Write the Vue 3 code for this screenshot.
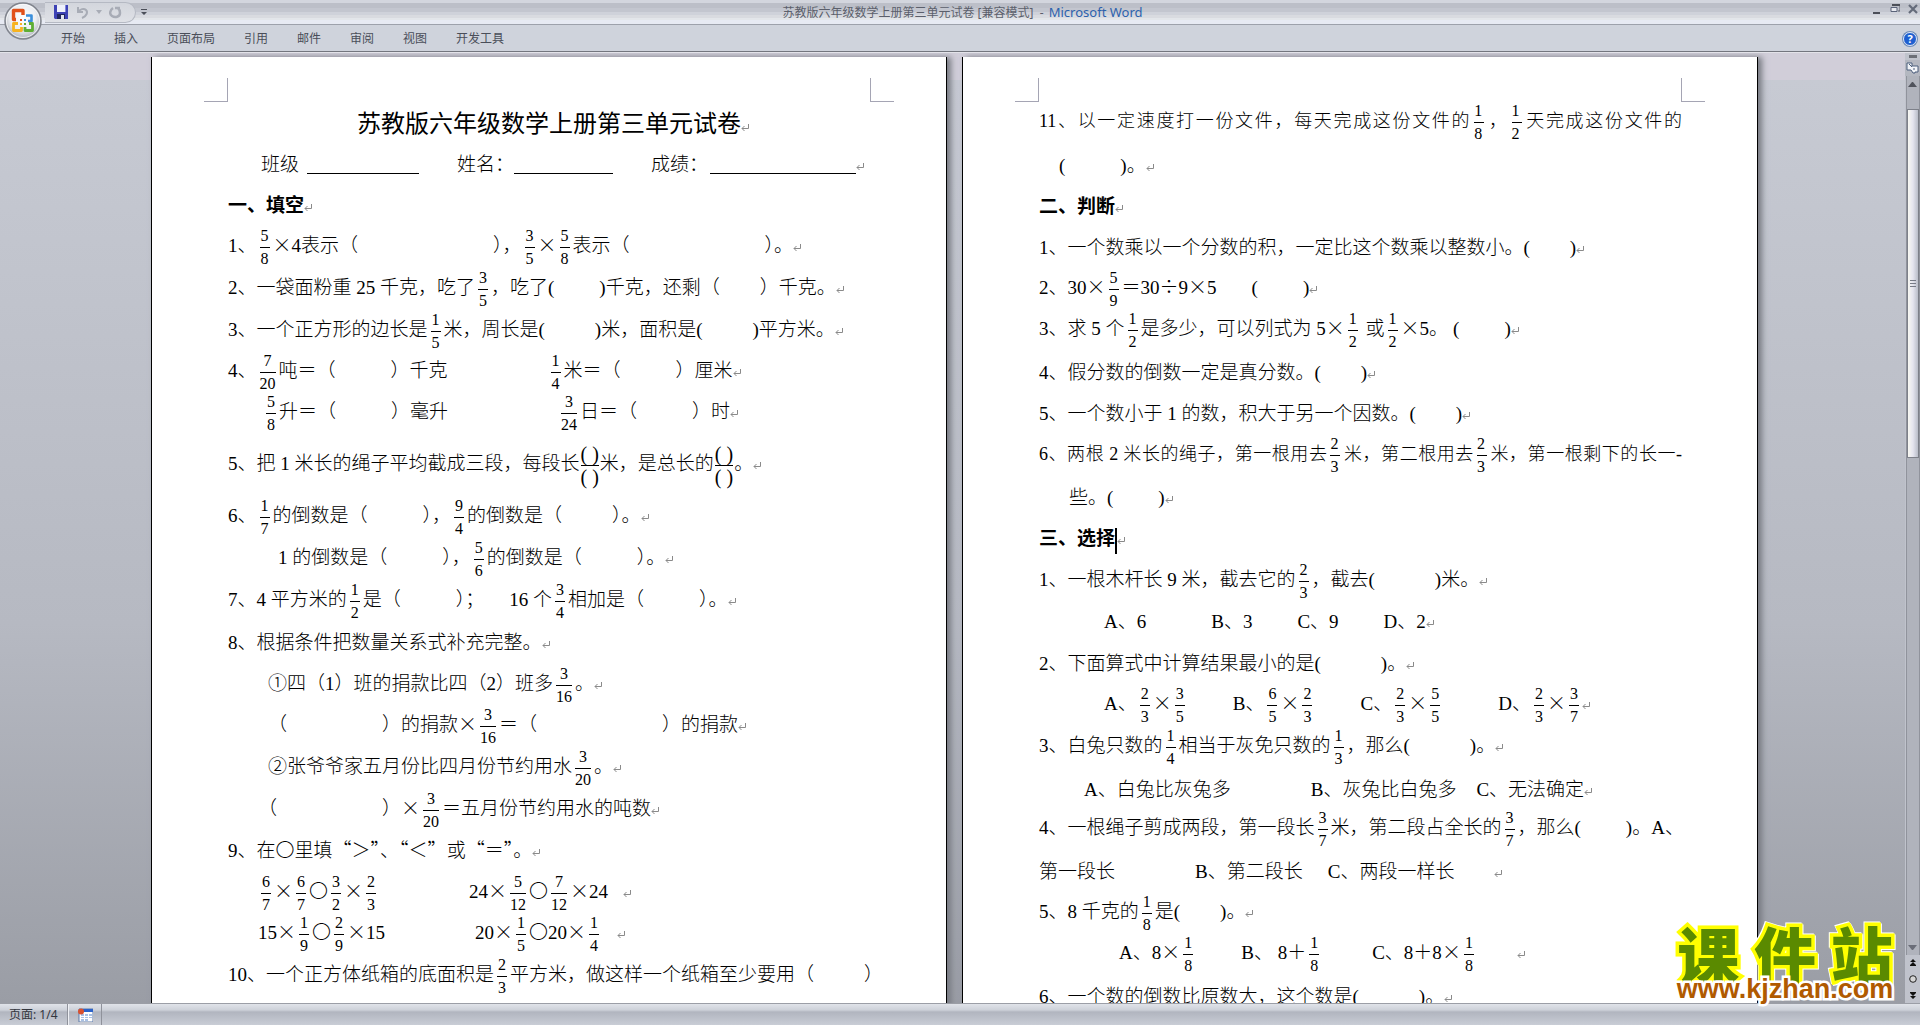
<script setup>
const tabs = ['开始', '插入', '页面布局', '引用', '邮件', '审阅', '视图', '开发工具']

// Line markup: {a/b} fraction, [n] blank of n pixels, *x* bold, ¶ paragraph mark, | caret
const pageOne = [
  { h: 40, kind: 'heading', t: '一、填空¶' },
  { h: 42, t: '1、{5/8}×4表示（[135]），{3/5}×{5/8}表示（[135]）。¶' },
  { h: 42, t: '2、一袋面粉重 *25* 千克，吃了{3/5}，吃了([45])千克，还剩（[40]）千克。¶' },
  { h: 41, t: '3、一个正方形的边长是{1/5}米，周长是([50])米，面积是([50])平方米。¶' },
  { h: 41, t: '4、{7/20}吨＝（[55]）千克[100]{1/4}米＝（[55]）厘米¶' },
  { h: 52, t: '[35]{5/8}升＝（[55]）毫升[110]{3/24}日＝（[55]）时¶' },
  { h: 52, t: '5、把 1 米长的绳子平均截成三段，每段长{( )/( )}米，是总长的{( )/( )}。¶' },
  { h: 42, t: '6、{1/7}的倒数是（[55]），{9/4}的倒数是（[50]）。¶' },
  { h: 42, t: '[50]1 的倒数是（[55]），{5/6}的倒数是（[55]）。¶' },
  { h: 43, t: '7、4 平方米的{1/2}是（[55]）；[25]16 个{3/4}相加是（[55]）。¶' },
  { h: 41, t: '8、根据条件把数量关系式补充完整。¶' },
  { h: 41, t: '[40]①四（1）班的捐款比四（2）班多{3/16}。¶' },
  { h: 42, t: '[40]（[95]）的捐款×{3/16}＝（[125]）的捐款¶' },
  { h: 42, t: '[40]②张爷爷家五月份比四月份节约用水{3/20}。¶' },
  { h: 42, t: '[30]（[105]）×{3/20}＝五月份节约用水的吨数¶' },
  { h: 41, t: '9、在〇里填“＞”、“＜”或“＝”。¶' },
  { h: 41, t: '[30]{6/7}×{6/7}〇{3/2}×{2/3}[90]24×{5/12}〇{7/12}×24[15]¶' },
  { h: 42, t: '[30]15×{1/9}〇{2/9}×15[90]20×{1/5}〇20×{1/4}[15]¶' },
  { h: 42, t: '10、一个正方体纸箱的底面积是{2/3}平方米，做这样一个纸箱至少要用（[50]）' },
]

const pageTwo = [
  { h: 45, kind: 'full', t: '11、以一定速度打一份文件，每天完成这份文件的{1/8}，{1/2}天完成这份文件的' },
  { h: 41, t: '[20]([55])。¶' },
  { h: 41, kind: 'heading', t: '二、判断¶' },
  { h: 40, t: '1、一个数乘以一个分数的积，一定比这个数乘以整数小。([40])¶' },
  { h: 41, t: '2、30×{5/9}＝30÷9×5[35]([45])¶' },
  { h: 44, t: '3、求 5 个{1/2}是多少，可以列式为 5×{1/2} 或{1/2}×5。[5]([45])¶' },
  { h: 41, t: '4、假分数的倒数一定是真分数。([40])¶' },
  { h: 40, t: '5、一个数小于 1 的数，积大于另一个因数。([40])¶' },
  { h: 44, kind: 'full', t: '6、两根 2 米长的绳子，第一根用去{2/3}米，第二根用去{2/3}米，第一根剩下的长一-' },
  { h: 41, t: '[30]些。([45])¶' },
  { h: 41, kind: 'heading', t: '三、选择|¶' },
  { h: 42, t: '1、一根木杆长 9 米，截去它的{2/3}，截去([60])米。¶' },
  { h: 42, t: '[65]A、6[65]B、3[45]C、9[45]D、2¶' },
  { h: 40, t: '2、下面算式中计算结果最小的是([60])。¶' },
  { h: 42, t: '[65]A、{2/3}×{3/5}[45]B、{6/5}×{2/3}[45]C、{2/3}×{5/5}[55]D、{2/3}×{3/7}¶' },
  { h: 44, t: '3、白兔只数的{1/4}相当于灰免只数的{1/3}，那么([60])。¶' },
  { h: 38, t: '[45]A、白兔比灰兔多[80]B、灰兔比白兔多[20]C、无法确定¶' },
  { h: 44, t: '4、一根绳子剪成两段，第一段长{3/7}米，第二段占全长的{3/7}，那么([45])。A、' },
  { h: 40, t: '第一段长[80]B、第二段长[25]C、两段一样长[40]¶' },
  { h: 41, t: '5、8 千克的{1/8}是([40])。¶' },
  { h: 44, t: '[80]A、8×{1/8}[45]B、 8＋{1/8}[50]C、8＋8×{1/8}[40]¶' },
  { h: 42, t: '6、一个数的倒数比原数大，这个数是([60])。¶' },
]

const pattern = /\{([^/]+)\/([^}]+)\}|\[(\d+)\]|\*([^*]+)\*|([×÷“”]+)|(¶)|(\|)|([^{[*×÷“”¶|]+)/g

function parse(line) {
  return [...line.matchAll(pattern)].map((m) => {
    if (m[1]) return { type: 'frac', top: m[1], bottom: m[2], tall: m[1] === '( )' }
    if (m[3]) return { type: 'gap', width: Number(m[3]) }
    if (m[4]) return { type: 'bold', text: m[4] }
    if (m[5]) return { type: 'wide', text: m[5] }
    if (m[6]) return { type: 'mark' }
    if (m[7]) return { type: 'caret' }
    return { type: 'text', text: m[8] }
  })
}

const prepare = (lines) => lines.map((l) => ({ ...l, tokens: parse(l.t) }))
const pages = [
  { id: 'one', lines: prepare(pageOne) },
  { id: 'two', lines: prepare(pageTwo) },
]
const fields = [
  { label: '班级', size: 'medium' },
  { label: '姓名：', size: 'small' },
  { label: '成绩：', size: 'large' },
]
</script>

<template>
  <div class="window">
    <header class="titlebar">
      <button class="orb" aria-label="Office">
        <svg width="38" height="38" viewBox="0 0 38 38">
          <defs>
            <radialGradient id="orbFill" cx="50%" cy="40%" r="60%">
              <stop offset="0" stop-color="#fff" />
              <stop offset=".6" stop-color="#eceef2" />
              <stop offset="1" stop-color="#a9adb6" />
            </radialGradient>
          </defs>
          <circle cx="19" cy="19" r="18" fill="url(#orbFill)" stroke="#80848d" stroke-width="1.5" />
          <circle cx="19" cy="19" r="16.5" fill="none" stroke="#fff" stroke-opacity=".7" />
          <g fill="none" stroke-width="3.4" stroke-linejoin="round">
            <path d="M12 17.500H9.500V8.500H19V13" stroke="#e1501a" />
            <path d="M22 13.500H27.500V19H24" stroke="#3b8fdb" stroke-width="2.600" />
            <path d="M14 21.500H9.500V28.500H17.500V25" stroke="#f7b320" stroke-width="2.800" />
            <path d="M21 25V28.500H28.500V21.500H25" stroke="#5fae35" stroke-width="2.800" />
          </g>
          <path d="M16 17h2v2h-2z" fill="#e1501a" />
          <path d="M20 17h2v2h-2z" fill="#3b8fdb" />
          <path d="M16 21h2v2h-2z" fill="#f7b320" />
          <path d="M20 21h2v2h-2z" fill="#5fae35" />
        </svg>
      </button>
      <div class="quick">
        <button aria-label="保存">
          <svg width="14" height="14" viewBox="0 0 14 14">
            <path d="M0 0h14v14H1l-1-1z" fill="#3d42b5" />
            <path d="M3 0h8v7H3z" fill="#eef1fb" />
            <path d="M11 0h1v7h-1z" fill="#7f86dd" />
            <path d="M3 9h8v5H3z" fill="#20265f" />
            <path d="M7 10h3v4H7z" fill="#e3e6f0" />
          </svg>
        </button>
        <button aria-label="撤消">
          <svg width="13" height="13" viewBox="0 0 13 13" fill="none" stroke="#a8acb6" stroke-width="2">
            <path d="M2 1v5h5M2 6c2-3 6-4 8-2s1 6-4 8" />
          </svg>
        </button>
        <button class="drop" aria-label="撤消列表">
          <svg width="6" height="4" viewBox="0 0 6 4"><path d="M0 0h6L3 4z" fill="#a8acb6" /></svg>
        </button>
        <button aria-label="重复">
          <svg width="13" height="13" viewBox="0 0 13 13" fill="none" stroke="#a8acb6" stroke-width="2.500">
            <path d="M4 2C1 4 0 8 3 10s8 1 8-3c0-2-1-4-2-5M6 2h5" />
          </svg>
        </button>
      </div>
      <button class="more" aria-label="自定义快速访问工具栏">
        <svg width="6" height="6" viewBox="0 0 6 6"><path d="M0 0h6v1H0zM0 3h6L3 6z" fill="#4b4f59" /></svg>
      </button>
      <h1 class="caption">苏教版六年级数学上册第三单元试卷 [兼容模式]&nbsp; - <span>Microsoft Word</span></h1>
      <div class="controls">
        <button aria-label="最小化">
          <svg width="10" height="10" viewBox="0 0 10 10"><path d="M1 8h7v2H1z" fill="#4c4f58" /></svg>
        </button>
        <button aria-label="还原">
          <svg width="10" height="10" viewBox="0 0 10 10">
            <path d="M2 1h8v6H8" fill="none" stroke="#5a5f6d" />
            <path d="M2 0h8v2H2z" fill="#4c4f58" />
            <path d="M1 3.500h6v4H1z" fill="#e8eaf0" stroke="#5a6379" />
          </svg>
        </button>
        <button aria-label="关闭">
          <svg width="10" height="10" viewBox="0 0 10 10"><path d="M1 1l8 8M9 1l-8 8" stroke="#646b7a" stroke-width="2.200" /></svg>
        </button>
      </div>
    </header>

    <nav class="ribbon">
      <button v-for="tab in tabs" :key="tab" class="tab">{{ tab }}</button>
      <button class="help" aria-label="帮助">?</button>
    </nav>

    <main class="workspace">
      <div class="desk">
        <article v-for="page in pages" :key="page.id" class="page" :class="page.id">
          <div class="corners"><i></i><i></i></div>
          <template v-if="page.id === 'one'">
            <h2 class="doc-title">
              苏教版六年级数学上册第三单元试卷<svg class="mark" width="8" height="8" viewBox="0 0 8 8"><path d="M7.500 0v4.500H1M3.500 2L1 4.500L3.500 7" /></svg>
            </h2>
            <p class="fields">
              <span v-for="f in fields" :key="f.label" class="field">{{ f.label }}<i :class="f.size"></i></span>
              <svg class="mark" width="8" height="8" viewBox="0 0 8 8"><path d="M7.500 0v4.500H1M3.500 2L1 4.500L3.500 7" /></svg>
            </p>
          </template>
          <p v-for="(line, n) in page.lines" :key="n" class="line" :class="line.kind" :style="{ minHeight: line.h + 'px' }">
            <template v-for="(k, i) in line.tokens" :key="i">
              <span v-if="k.type === 'frac'" class="frac" :class="{ tall: k.tall }"><span>{{ k.top }}</span><span>{{ k.bottom }}</span></span>
              <span v-else-if="k.type === 'gap'" class="gap" :style="{ width: k.width + 'px' }"></span>
              <b v-else-if="k.type === 'bold'">{{ k.text }}</b>
              <span v-else-if="k.type === 'wide'" class="wide">{{ k.text }}</span>
              <svg v-else-if="k.type === 'mark'" class="mark" width="8" height="8" viewBox="0 0 8 8"><path d="M7.500 0v4.500H1M3.500 2L1 4.500L3.500 7" /></svg>
              <span v-else-if="k.type === 'caret'" class="caret"></span>
              <template v-else>{{ k.text }}</template>
            </template>
          </p>
        </article>
      </div>

      <aside class="scroll">
        <div class="split"></div>
        <button class="ruler" aria-label="标尺">
          <svg width="13" height="12" viewBox="0 0 13 12">
            <path d="M1 1h5v3h6v6H9v1H7L5 8H1z" fill="#f2f4f8" stroke="#4d5f7c" />
            <path d="M3 2l3 3M8 6v2" stroke="#4d5f7c" />
          </svg>
        </button>
        <div class="track">
          <button class="arrow" aria-label="向上滚动">
            <svg width="9" height="5" viewBox="0 0 9 5"><path d="M0 5h9L5 0H4z" fill="#50535c" /></svg>
          </button>
          <div class="rail"><div class="thumb"><i></i><i></i><i></i></div></div>
          <button class="arrow down" aria-label="向下滚动">
            <svg width="9" height="5" viewBox="0 0 9 5"><path d="M0 0h9L5 5H4z" fill="#6a6d78" /></svg>
          </button>
        </div>
        <div class="browse">
          <button aria-label="前一页">
            <svg width="6" height="7" viewBox="0 0 6 7"><path d="M3 0l3 3H0zM3 3l3 3H0zM0 6h6v1H0z" fill="#111" /></svg>
          </button>
          <button aria-label="选择浏览对象">
            <svg width="8" height="8" viewBox="0 0 8 8"><circle cx="4" cy="4" r="3.300" fill="#d5d5d5" stroke="#222" /></svg>
          </button>
          <button aria-label="下一页">
            <svg width="6" height="7" viewBox="0 0 6 7"><path d="M0 0h6v1H0zM0 1h6L3 4zM0 4h6L3 7z" fill="#111" /></svg>
          </button>
        </div>
      </aside>
    </main>

    <footer class="status">
      <span class="pages">页面: 1/4</span>
      <button class="macro" aria-label="录制宏">
        <svg width="15" height="14" viewBox="0 0 15 14">
          <path d="M1 1h14v13H1z" fill="#fff" stroke="#5a78a8" />
          <path d="M3 1h12v3H3z" fill="#2b62c9" />
          <path d="M3 6h3v2H3zM7 6h3v2H7zM11 6h3v2h-3zM3 9h3v1H3zM7 9h3v1H7zM11 9h3v1h-3zM3 11h3v2H3zM7 11h3v2H7z" fill="#a9c1e4" />
          <circle cx="3" cy="3.500" r="3" fill="#d9512f" />
        </svg>
      </button>
    </footer>

    <div class="stamp">
      <div class="stamp-name"><span>课</span><span>件</span><span>站</span></div>
      <div class="stamp-url">www.kjzhan.com</div>
    </div>
  </div>
</template>

<style>
body {
  margin: 0;
  overflow: hidden;
}
</style>

<style scoped>
* {
  box-sizing: border-box;
}
button {
  display: flex;
  align-items: center;
  justify-content: center;
  border: 0;
  padding: 0;
  background: none;
  font: inherit;
  color: inherit;
}
.window {
  position: relative;
  display: flex;
  flex-direction: column;
  height: 100vh;
  background: #c8cbd4;
  font-family: "Noto Sans", "Noto Sans CJK SC", sans-serif;
  font-size: 12px;
  color: #4a4e59;
}
.titlebar {
  position: relative;
  display: flex;
  align-items: center;
  flex: none;
  height: 25px;
  padding-left: 45px;
  border-bottom: 1px solid #9da1ab;
  background: linear-gradient(#d3d6de 0 3px, #bcbfc8 3px 8px, #c3c6cf 8px 12px, #cfd2da 12px 15px, #d9dbe0 15px 18px, #e3e6ea 18px 20px, #e7eaf3 20px);
}
.orb {
  position: absolute;
  left: 4px;
  top: 2px;
  z-index: 2;
}
.quick {
  display: flex;
  align-items: center;
  gap: 8px;
  width: 91px;
  height: 21px;
  padding-left: 9px;
  border: 1px solid #b5b9c3;
  border-left: 0;
  border-radius: 0 11px 11px 0;
  background: linear-gradient(#d3d6dd, #dfe1e6);
}
.drop {
  margin: 0 -1px;
}
.more {
  margin-left: 5px;
}
.caption {
  position: absolute;
  left: 0;
  right: 0;
  top: 0;
  margin: 0;
  text-align: center;
  font-size: 12px;
  font-weight: 400;
  line-height: 24px;
  color: #5b5f6b;
  padding-left: 5px;
  pointer-events: none;
}
.caption span {
  margin-left: 2px;
  font-size: 13px;
  color: #2d62ad;
}
.controls {
  display: flex;
  gap: 8px;
  margin-left: auto;
  margin-right: 2px;
  margin-top: -7px;
}
.ribbon {
  display: flex;
  align-items: center;
  gap: 29px;
  flex: none;
  height: 27px;
  padding: 1px 3px 0 61px;
  border-bottom: 1px solid #73767e;
  background: #cfd3dc;
}
.tab {
  line-height: 26px;
}
.help {
  width: 14px;
  height: 14px;
  margin-left: auto;
  border: 1px solid #dfe8f7;
  border-radius: 50%;
  background: #1f5fd0;
  box-shadow: 0 0 0 1px #6f8db9;
  color: #fff;
  font-size: 11px;
  font-weight: 700;
  line-height: 12px;
}
.workspace {
  display: flex;
  flex: 1;
  min-height: 0;
  overflow: hidden;
  border-top: 1px solid #e3e3e9;
  background: linear-gradient(#d1ced9 0 27px, #c7cad3 27px, #b6b9c2 60%, #9a9da5);
}
.desk {
  display: flex;
  justify-content: center;
  align-items: flex-start;
  gap: 15px;
  flex: 1;
  height: 100%;
  margin-top: 4px;
  padding-left: 4px;
}
.page {
  width: 796px;
  min-height: 100%;
  border: solid #000;
  border-width: 0 1px;
  background: #fff;
  box-shadow: 4px 0 6px #777a82;
  color: #000;
  font-family: "Liberation Serif", "Noto Sans CJK SC", serif;
  font-size: 19px;
  font-weight: 300;
  padding: 0 75px 0 76px;
}
.corners {
  display: flex;
  justify-content: space-between;
  height: 45px;
  margin: 0 -23px 0 -24px;
  padding-top: 21px;
}
.corners i {
  width: 24px;
  height: 24px;
  border: solid #a5a5b4;
  border-width: 0 1px 1px 0;
}
.corners i + i {
  border-width: 0 0 1px 1px;
}
.doc-title {
  height: 41px;
  margin: 3px 0 0;
  padding-left: 7px;
  text-align: center;
  font-size: 24px;
  font-weight: 400;
  line-height: 38px;
  white-space: nowrap;
}
.fields {
  display: flex;
  height: 41px;
  margin: 0;
  padding-left: 33px;
  line-height: 38px;
}
.field {
  display: flex;
  margin-right: 38px;
}
.field:last-of-type {
  margin-right: 0;
}
.field i {
  height: 28px;
  border-bottom: 1px solid #000;
}
.field .medium {
  width: 112px;
  margin-left: 8px;
}
.field .small {
  width: 99px;
}
.field .large {
  width: 146px;
  margin-left: 2px;
}
.fields .mark {
  margin-top: 17px;
}
.line {
  margin: 0;
  line-height: 38px;
  white-space: nowrap;
}
.heading {
  font-weight: 700;
}
.full {
  font-size: 18px;
  text-align: justify;
  text-align-last: justify;
}
.wide {
  font-family: "Noto Sans CJK SC", sans-serif;
  line-height: 20px;
}
.gap {
  display: inline-block;
}
.frac {
  display: inline-flex;
  flex-direction: column;
  margin: -5px 3px;
  min-width: 10px;
  vertical-align: middle;
  text-align: center;
  font-size: 16px;
  line-height: 22px;
}
.frac span + span {
  border-top: 1px solid #000;
}
.tall {
  margin: -5px 1px;
  font-size: 20px;
}
.mark {
  fill: none;
  stroke: #8a8a8a;
}
.caret {
  display: inline-block;
  width: 2px;
  height: 26px;
  margin: -6px 0;
  vertical-align: middle;
  background: #000;
}
.scroll {
  display: flex;
  flex-direction: column;
  align-items: center;
  flex: none;
  width: 15px;
  background: #c0c3cc;
}
.split {
  flex: none;
  width: 8px;
  height: 3px;
  margin: 2px 0;
  background: #6c6f77;
}
.ruler {
  flex: none;
  width: 15px;
  height: 16px;
  background: #b4b7c0;
}
.track {
  display: flex;
  flex-direction: column;
  flex: 1;
  width: 14px;
  min-height: 0;
  border: 1px solid #90939c;
  border-width: 0 1px;
  background: #b0b3bc;
}
.arrow {
  height: 16px;
}
.arrow.down {
  height: 15px;
}
.rail {
  flex: 1;
  padding-top: 17px;
}
.thumb {
  display: flex;
  flex-direction: column;
  align-items: center;
  justify-content: center;
  gap: 2px;
  height: 42%;
  border: 1px solid #7d8089;
  background: linear-gradient(90deg, #f8f8f2, #e4e4ee 50%, #b9bdc8);
}
.thumb i {
  width: 6px;
  height: 1px;
  background: #777b86;
}
.browse {
  display: flex;
  flex-direction: column;
  justify-content: space-around;
  align-items: center;
  height: 48px;
}
.status {
  display: flex;
  align-items: stretch;
  flex: none;
  height: 22px;
  border-top: 1px solid #9b9ea6;
  background: linear-gradient(#e0e3e9, #cdd1d9 6px, #b1b5bf 8px, #c9cdd6);
  color: #33363e;
}
.pages {
  padding: 0 8px 0 9px;
  border-right: 1px solid #8f929b;
  width: 68px;
  font-size: 12px;
  line-height: 21px;
  white-space: nowrap;
}
.macro {
  width: 34px;
  border-left: 1px solid #eef0f4;
  border-right: 1px solid #8f929b;
}
.stamp {
  position: absolute;
  right: 20px;
  bottom: 22px;
  width: 230px;
  font-weight: 900;
  pointer-events: none;
}
.stamp-name {
  display: flex;
  justify-content: space-around;
  font-family: "Noto Sans CJK SC", sans-serif;
  font-size: 62px;
  line-height: 44px;
  color: #5a8a00;
  -webkit-text-stroke: 7px #ff0;
  paint-order: stroke fill;
  filter: drop-shadow(1px 1px 0 #fff) drop-shadow(-1px -1px 0 #fff);
}
.stamp-url {
  position: relative;
  font-family: "Liberation Sans", sans-serif;
  font-size: 27px;
  line-height: 28px;
  text-align: center;
  color: #b05a00;
  -webkit-text-stroke: 5px #fff;
  paint-order: stroke fill;
}
</style>
